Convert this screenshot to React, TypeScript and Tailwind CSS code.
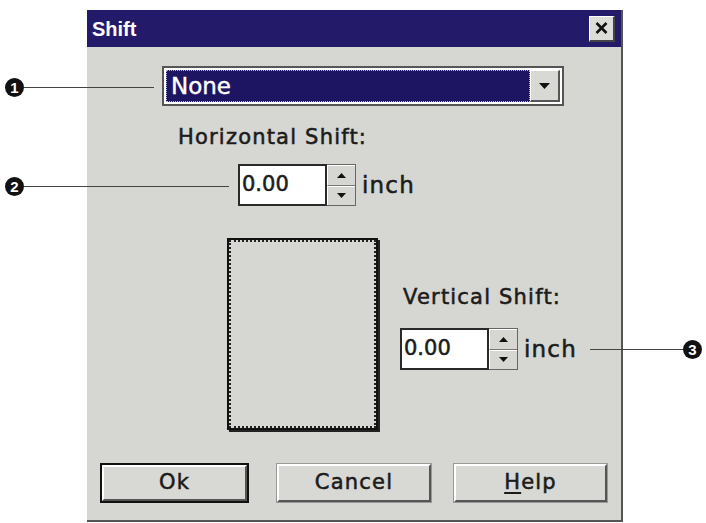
import React from "react";

const ui =
  "font-['DejaVu_Sans',sans-serif] tracking-[1.2px] text-[21px] text-[#1c1c1c] [-webkit-text-stroke:0.55px_#1c1c1c]";

function Callout({ n }: { n: string }) {
  return (
    <span className="flex h-[19px] w-[19px] items-center justify-center rounded-full bg-[#111] font-['Liberation_Sans',sans-serif] text-[15px] font-bold leading-none text-white">
      {n}
    </span>
  );
}

function Tri({ up }: { up?: boolean }) {
  return (
    <svg width="9" height="5" viewBox="0 0 9 5">
      <polygon points={up ? "0,5 9,5 4.5,0" : "0,0 9,0 4.5,5"} fill="#111" />
    </svg>
  );
}

function Spinner() {
  return (
    <div className="flex items-center">
      <div className={`flex h-[42px] w-[89px] items-center border-2 border-[#2a2a2a] bg-white pl-[2px] ${ui} tracking-normal`}>
        0.00
      </div>
      <div className="flex h-[42px] w-[29px] flex-col border-y border-r border-[#666] bg-[#d6d6d2]">
        <div className="flex flex-1 items-center justify-center border-b border-[#777] border-t border-t-white border-l border-l-white">
          <Tri up />
        </div>
        <div className="flex flex-1 items-center justify-center border-t border-t-white border-l border-l-white">
          <Tri />
        </div>
      </div>
      <span className={`${ui} ml-[6px] text-[23px]`}>inch</span>
    </div>
  );
}

function Btn({ children, w, def }: { children: React.ReactNode; w: string; def?: boolean }) {
  return (
    <div className={`${w} h-[40px] ${def ? "border-2 border-[#111]" : "border border-[#999]"}`}>
      <div className="flex h-full w-full items-center justify-center border-t-2 border-l-2 border-t-white border-l-white border-b-2 border-r-2 border-b-[#555] border-r-[#555] bg-[#d8d8d4]">
        <span className={ui}>{children}</span>
      </div>
    </div>
  );
}

export default function App() {
  return (
    <div className="relative h-[523px] w-[706px] overflow-hidden bg-white">
      <div className="ml-[87px] pt-[10px]">
        <div className="flex h-[512px] w-[536px] flex-col border-r-2 border-b-2 border-r-[#555] border-b-[#555] bg-[#d6d6d2]">
          {/* title bar */}
          <div className="flex h-[37px] items-center justify-between bg-[#231a6a] pl-[5px] pr-[6px]">
            <span className="font-['Liberation_Sans',sans-serif] text-[20px] font-bold text-white">Shift</span>
            <div className="flex h-[26px] w-[26px] items-center justify-center border-t border-l border-white border-b-2 border-r-2 border-b-[#444] border-r-[#444] bg-[#dcdcd8]">
              <svg width="13" height="12" viewBox="0 0 13 12">
                <path d="M1.5 1 L11.5 11 M11.5 1 L1.5 11" stroke="#111" strokeWidth="2.6" />
              </svg>
            </div>
          </div>

          {/* combo */}
          <div className="ml-[75px] mt-[19px] flex h-[40px] w-[402px] border-2 border-[#555] bg-white p-[2px]">
            <div className="flex flex-1 items-center border border-dotted border-[#b9b6d8] bg-[#1e1562] pl-[4px] font-['DejaVu_Sans',sans-serif] text-[23px] leading-none text-white [-webkit-text-stroke:0.4px_#ffffff]">
              None
            </div>
            <div className="flex w-[30px] items-center justify-center border-t border-l border-white border-b-2 border-r-2 border-b-[#555] border-r-[#555] bg-[#d8d8d4]">
              <svg width="11" height="6" viewBox="0 0 11 6">
                <polygon points="0,0 11,0 5.5,6" fill="#111" />
              </svg>
            </div>
          </div>

          <div className={`${ui} ml-[91px] mt-[16px] leading-[30px]`}>Horizontal Shift:</div>

          <div className="ml-[151px] mt-[12px]">
            <Spinner />
          </div>

          {/* preview + vertical shift */}
          <div className="mt-[32px] flex">
            <div className="ml-[140px] h-[192px] w-[151px] border-2 border-[#111] shadow-[2px_2px_0_#222]">
              <div className="h-full w-full border-2 border-dotted border-[#222]" />
            </div>
            <div className="ml-[22px] mt-[44px] flex flex-col">
              <div className={`${ui} ml-[3px] leading-[30px]`}>Vertical Shift:</div>
              <div className="mt-[16px]">
                <Spinner />
              </div>
            </div>
          </div>

          {/* buttons */}
          <div className="ml-[13px] mt-[33px] flex gap-[27px]">
            <Btn w="w-[149px]" def>Ok</Btn>
            <Btn w="w-[156px]">Cancel</Btn>
            <div className="-ml-[6px]">
              <Btn w="w-[155px]">
                <span className="underline underline-offset-[3px]">H</span>elp
              </Btn>
            </div>
          </div>
        </div>
      </div>

      {/* callouts */}
      <div className="absolute left-[5px] top-[78px] flex items-center">
        <Callout n="1" />
        <div className="h-px w-[130px] bg-[#444]" />
      </div>
      <div className="absolute left-[5px] top-[177px] flex items-center">
        <Callout n="2" />
        <div className="h-px w-[205px] bg-[#444]" />
      </div>
      <div className="absolute left-[590px] top-[340px] flex items-center">
        <div className="h-px w-[93px] bg-[#444]" />
        <Callout n="3" />
      </div>
    </div>
  );
}
